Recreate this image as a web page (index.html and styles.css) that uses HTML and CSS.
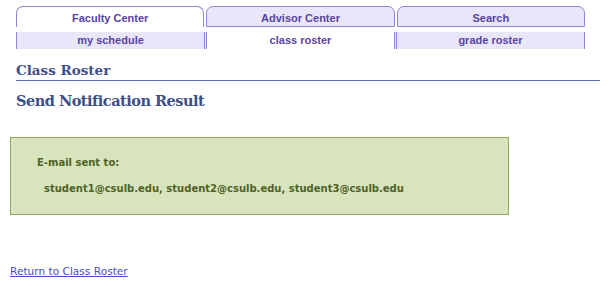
FILE: index.html
```html
<!DOCTYPE html>
<html>
<head>
<meta charset="utf-8">
<link rel="stylesheet" href="styles.css">
</head>
<body>
<div class="page">
  <div class="nav">
    <div class="tabs">
      <div class="tab active">Faculty Center</div>
      <div class="tab">Advisor Center</div>
      <div class="tab">Search</div>
    </div>
    <div class="subtabs">
      <div class="sub">my schedule</div>
      <div class="sub current">class roster</div>
      <div class="sub">grade roster</div>
    </div>
  </div>
  <h1 class="title">Class Roster</h1>
  <h2 class="subtitle">Send Notification Result</h2>
  <div class="notice">
    <div class="notice-label">E-mail sent to:</div>
    <div class="notice-list">student1@csulb.edu, student2@csulb.edu, student3@csulb.edu</div>
  </div>
  <a class="back" href="#">Return to Class Roster</a>
</div>
</body>
</html>
```
FILE: styles.css
```css
html, body { margin: 0; padding: 0; background: #fff; }
.page { padding: 0 0 0 10px; width: 590px; }
.nav { margin-left: 6px; width: 569px; padding-top: 6px; }
.tabs { display: flex; gap: 2px; height: 21px; }
.tab {
  flex: 1 1 0;
  box-sizing: border-box;
  border: 1px solid #8a88d2;
  border-radius: 7px 7px 0 0;
  background: #e8e6f8;
  color: #5a42a6;
  font: bold 11px "Liberation Sans", Arial, sans-serif;
  text-align: center;
  padding-top: 5px;
}
.tab.active { background: #fff; border-bottom: none; }
.subtabs { display: flex; margin-top: 5px; height: 17px; }
.sub {
  flex: 1 1 0;
  background: #e8e6f8;
  color: #5a42a6;
  font: bold 11px "Liberation Sans", Arial, sans-serif;
  text-align: center;
  padding-top: 2px;
  box-sizing: border-box;
}
.sub:first-child { border-left: 1px solid #8a88d2; border-right: 3px double #8a88d2; }
.sub.current { background: #fff; }
.sub:last-child { border-left: 3px double #8a88d2; border-right: 1px solid #8a88d2; }
.title {
  margin: 13px 0 0 6px;
  width: 584px;
  font: bold 13.5px "DejaVu Serif", Georgia, serif;
  color: #3d4f8a;
  border-bottom: 1px solid #5b6aa8;
  padding-bottom: 2px;
}
.subtitle {
  margin: 11px 0 0 6px;
  font: bold 14.5px "DejaVu Serif", Georgia, serif;
  letter-spacing: -0.5px;
  color: #3d4f8a;
}
.notice {
  margin-top: 28px;
  width: 499px;
  height: 78px;
  box-sizing: border-box;
  background: #d8e4bc;
  border: 1px solid #8eaa5a;
  padding: 19px 0 0 26px;
  color: #4f6228;
  font: bold 10px "DejaVu Sans", Verdana, sans-serif;
}
.notice-list { margin: 15px 0 0 7px; }
.back {
  display: inline-block;
  margin-top: 50px;
  color: #4a4ad0;
  font: 10.6px "DejaVu Sans", Verdana, sans-serif;
}
```
